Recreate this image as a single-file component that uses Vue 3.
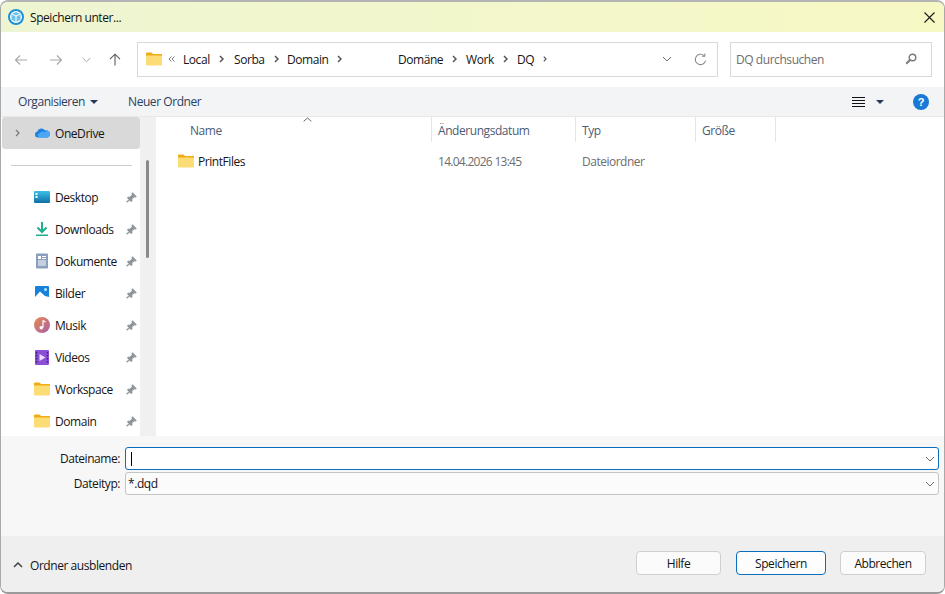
<script setup>
const crumbs = [
  { t: 'Local', w: 51 },
  { t: 'Sorba', w: 53 },
  { t: 'Domain', w: 111 },
  { t: 'Domäne', w: 68 },
  { t: 'Work', w: 51 },
  { t: 'DQ', w: 30 }
]
const places = [
  { t: 'Desktop', i: 'desktop' },
  { t: 'Downloads', i: 'downloads' },
  { t: 'Dokumente', i: 'docs' },
  { t: 'Bilder', i: 'pics' },
  { t: 'Musik', i: 'music' },
  { t: 'Videos', i: 'videos' },
  { t: 'Workspace', i: 'folder' },
  { t: 'Domain', i: 'folder' }
]
const cols = [
  { t: 'Name', w: 276, pad: 34 },
  { t: 'Änderungsdatum', w: 144, pad: 6 },
  { t: 'Typ', w: 120, pad: 6 },
  { t: 'Größe', w: 80, pad: 6 }
]
</script>

<template>
  <div class="win">
    <header class="title">
      <svg class="appicon" width="16" height="16" viewBox="0 0 16 16">
        <circle cx="8" cy="8" r="7" fill="#fff" stroke="#1c8fd6" stroke-width="2" />
        <path d="M8 3 12.500 5V10.800L8 13 3.500 10.800V5Z" fill="#6cc0ec" />
        <path d="M3.500 5 8 7 12.500 5M8 7V13" fill="none" stroke="#fff" stroke-width="1" />
      </svg>
      <span class="title-text">Speichern unter...</span>
      <svg class="close" width="11" height="11" viewBox="0 0 11 11">
        <path d="M.5.5l10 10M10.500.5l-10 10" stroke="#1a1a1a" stroke-width="1.100" fill="none" />
      </svg>
    </header>

    <nav class="navbar">
      <div class="navbtns">
        <svg width="14" height="12" viewBox="0 0 14 12"><path d="M13 6H1.500M6 1.500 1.500 6 6 10.500" fill="none" stroke="#a6a6a6" stroke-width="1.100" /></svg>
        <svg class="nb2" width="14" height="12" viewBox="0 0 14 12"><path d="M1 6h11.500M8 1.500 12.500 6 8 10.500" fill="none" stroke="#a6a6a6" stroke-width="1.100" /></svg>
        <svg class="nb3" width="9" height="6" viewBox="0 0 9 6"><path d="M.7 1 4.500 4.800 8.300 1" fill="none" stroke="#a6a6a6" stroke-width="1" /></svg>
        <svg class="nb4" width="12" height="13" viewBox="0 0 12 13"><path d="M6 12.500V1.200M1 6.200 6 1.200l5 5" fill="none" stroke="#5c5c5c" stroke-width="1.100" /></svg>
      </div>
      <div class="address">
        <svg class="addr-folder" width="16" height="14" viewBox="0 0 16 14">
          <path d="M0 1.500Q0 .5 1 .5H5.500L7 2H16V4H0Z" fill="#f0ad17" />
          <path d="M0 3.500H15Q16 3.500 16 4.500V12.500Q16 13.500 15 13.500H1Q0 13.500 0 12.500Z" fill="#fbdc75" />
        </svg>
        <svg class="overflow" width="7" height="6" viewBox="0 0 7 6"><path d="M3.500.5 1 3l2.500 2.500M6.500.5 4 3l2.500 2.500" fill="none" stroke="#777" stroke-width="1" /></svg>
        <span v-for="c in crumbs" :key="c.t" class="crumb" :style="{ width: c.w + 'px' }">
          <span>{{ c.t }}</span>
          <svg width="5" height="8" viewBox="0 0 5 8"><path d="M1 1l3 3-3 3" fill="none" stroke="#555" stroke-width="1.500" /></svg>
        </span>
        <span class="spacer"></span>
        <svg class="addr-drop" width="10" height="6" viewBox="0 0 10 6"><path d="M1 1l4 4 4-4" fill="none" stroke="#6e6e6e" stroke-width="1" /></svg>
        <svg class="refresh" width="13" height="13" viewBox="0 0 13 13"><path d="M11.600 7.500A5.200 5.200 0 1 1 10 2.600" fill="none" stroke="#8a8a8a" stroke-width="1.100" /><path d="M10.800.4V3.300H7.900" fill="none" stroke="#8a8a8a" stroke-width="1.100" /></svg>
      </div>
      <div class="search">
        <span>DQ durchsuchen</span>
        <svg width="12" height="12" viewBox="0 0 12 12"><circle cx="7.500" cy="4.500" r="3.300" fill="none" stroke="#7a7a7a" stroke-width="1.400" /><path d="M5 7 1.200 10.800" stroke="#7a7a7a" stroke-width="2" /></svg>
      </div>
    </nav>

    <div class="toolbar">
      <span class="tool">Organisieren</span>
      <span class="caret"></span>
      <span class="tool newfolder">Neuer Ordner</span>
      <span class="spacer"></span>
      <svg class="viewicon" width="13" height="10" viewBox="0 0 13 10"><path d="M0 .5h13M0 3.500h13M0 6.500h13M0 9.500h13" stroke="#111" stroke-width="1" /></svg>
      <span class="caret view-caret"></span>
      <svg class="help" width="16" height="16" viewBox="0 0 16 16">
        <circle cx="8" cy="8" r="8" fill="#1979d4" />
        <text x="8" y="12" text-anchor="middle" font-family="Liberation Sans, sans-serif" font-size="11" font-weight="700" fill="#fff">?</text>
      </svg>
    </div>

    <main class="main">
      <aside class="side">
        <div class="side-list">
          <div class="row selected">
            <svg class="expander" width="5" height="8" viewBox="0 0 5 8"><path d="M1 1l3 3-3 3" fill="none" stroke="#777" stroke-width="1.200" /></svg>
            <svg class="item-icon" width="16" height="16" viewBox="0 0 16 16">
              <path d="M3.500 12.500A3 3 0 0 1 3.300 6.600 4.200 4.200 0 0 1 11 5.500 3.500 3.500 0 0 1 15.800 9 3.300 3.300 0 0 1 13 12.500Z" fill="#1f7fe0" />
              <path d="M5 12.500A2.400 2.400 0 0 1 6 8 3 3 0 0 1 11 7.500 2.600 2.600 0 0 1 15.800 9.500 3.300 3.300 0 0 1 13 12.500Z" fill="#4aa8f2" />
            </svg>
            <span class="label">OneDrive</span>
          </div>
          <div class="sep"></div>
          <div v-for="p in places" :key="p.t" class="row">
            <svg class="item-icon" width="16" height="16" viewBox="0 0 16 16">
              <defs>
                <linearGradient id="desk" x1="0" y1="0" x2="0" y2="1"><stop offset="0" stop-color="#3cc0e8" /><stop offset="1" stop-color="#0f6fa8" /></linearGradient>
                <linearGradient id="mus" x1="0" y1="0" x2="1" y2="1"><stop offset="0" stop-color="#e58a4f" /><stop offset="1" stop-color="#a95fa8" /></linearGradient>
              </defs>
              <template v-if="p.i === 'desktop'">
                <rect y="2" width="16" height="12" rx="1" fill="url(#desk)" />
                <rect x="1.500" y="4" width="2" height="2" fill="#fff" />
                <rect x="1.500" y="7" width="2" height="2" fill="#fff" />
              </template>
              <template v-else-if="p.i === 'downloads'">
                <path d="M8 1V10.500M3.500 6.500 8 11l4.500-4.500" fill="none" stroke="#1fae8f" stroke-width="2" />
                <rect x="2" y="13.500" width="12" height="1.500" fill="#1fae8f" />
              </template>
              <template v-else-if="p.i === 'docs'">
                <rect x="2" y="0.500" width="12" height="15" rx="1" fill="#8a9fbc" />
                <rect x="4" y="3" width="3" height="3" fill="#fff" />
                <path d="M8 3.500h4M8 5.500h4M4 8h8M4 10h8M4 12h8" stroke="#fff" stroke-width="1" />
              </template>
              <template v-else-if="p.i === 'pics'">
                <rect x="1" y="1" width="14" height="14" rx="1" fill="#1583dc" />
                <path d="M1 12 6 6.500 11 11 15 12V15H1Z" fill="#fff" />
                <circle cx="11.500" cy="4.500" r="1.500" fill="#bfe2fb" />
              </template>
              <template v-else-if="p.i === 'music'">
                <circle cx="8" cy="8" r="8" fill="url(#mus)" />
                <path d="M9 3.500V10.500" stroke="#fff" stroke-width="1.200" />
                <circle cx="7.300" cy="10.800" r="1.800" fill="#fff" />
                <path d="M9 3.500 11.500 5" stroke="#fff" stroke-width="1.200" />
              </template>
              <template v-else-if="p.i === 'videos'">
                <rect x="1" y="1" width="14" height="15" rx="1" fill="#8a4fd6" />
                <path d="M5.500 5 11.500 8.500 5.500 12Z" fill="#e9dcfb" />
                <path d="M2.500 3v11M13.500 3v11" stroke="#3e1c7a" stroke-width="1.400" stroke-dasharray="1.400 1.600" />
              </template>
              <template v-else>
                <path d="M0 2.500Q0 1.500 1 1.500H5.500L7 3H16V5H0Z" fill="#f0ad17" />
                <path d="M0 4.500H15Q16 4.500 16 5.500V13.500Q16 14.500 15 14.500H1Q0 14.500 0 13.500Z" fill="#fbdc75" />
              </template>
            </svg>
            <span class="label">{{ p.t }}</span>
            <svg class="pin" width="11" height="11" viewBox="0 0 11 11">
              <path d="M6.500.2 10.800 4.500 9.500 5.500 8.200 5.200 6.300 7.300 6.300 9.200 5 10 1 6 1.800 4.700 3.700 4.700 5.800 2.800 5.500 1.500Z" fill="#8e979e" />
              <path d="M3 8 .7 10.300" stroke="#8e979e" stroke-width="1.400" />
            </svg>
          </div>
        </div>
        <div class="scrollbar"><div class="thumb"></div></div>
      </aside>
      <section class="files">
        <div class="headers">
          <div v-for="c in cols" :key="c.t" class="col" :style="{ width: c.w + 'px', paddingLeft: c.pad + 'px' }">{{ c.t }}</div>
          <svg class="sort" width="9" height="5" viewBox="0 0 9 5"><path d="M.7 4.300 4.500 1l3.800 3.300" fill="none" stroke="#666" stroke-width="1" /></svg>
        </div>
        <div class="file">
          <div class="file-name">
            <svg width="16" height="16" viewBox="0 0 16 16">
              <path d="M0 2.500Q0 1.500 1 1.500H5.500L7 3H16V5H0Z" fill="#f0ad17" />
              <path d="M0 4.500H15Q16 4.500 16 5.500V13.500Q16 14.500 15 14.500H1Q0 14.500 0 13.500Z" fill="#fbdc75" />
            </svg>
            <span>PrintFiles</span>
          </div>
          <div class="file-date">14.04.2026 13:45</div>
          <div class="file-type">Dateiordner</div>
        </div>
      </section>
    </main>

    <form class="form" @submit.prevent>
      <div class="field">
        <label>Dateiname:</label>
        <div class="combo active">
          <span class="cursor"></span>
          <span class="spacer"></span>
          <svg width="10" height="6" viewBox="0 0 10 6"><path d="M1 1l4 4 4-4" fill="none" stroke="#6e6e6e" stroke-width="1" /></svg>
        </div>
      </div>
      <div class="field">
        <label>Dateityp:</label>
        <div class="combo">
          <span>*.dqd</span>
          <span class="spacer"></span>
          <svg width="10" height="6" viewBox="0 0 10 6"><path d="M1 1l4 4 4-4" fill="none" stroke="#6e6e6e" stroke-width="1" /></svg>
        </div>
      </div>
    </form>

    <footer class="footer">
      <svg class="collapse" width="10" height="6" viewBox="0 0 10 6"><path d="M1 5l4-4 4 4" fill="none" stroke="#444" stroke-width="1.500" /></svg>
      <span class="hide">Ordner ausblenden</span>
      <span class="spacer"></span>
      <button class="btn b1" type="button">Hilfe</button>
      <button class="btn b2 primary" type="button">Speichern</button>
      <button class="btn b3" type="button">Abbrechen</button>
    </footer>
  </div>
</template>

<style>
html, body { margin: 0; background: #fff; overflow: hidden; }
</style>

<style scoped>
.win {
  width: 945px;
  height: 594px;
  box-sizing: border-box;
  border: 1px solid #a9a9a9;
  border-top: 2px solid #b4b4b4;
  border-bottom: 2px solid #9a9a9a;
  border-radius: 8px;
  overflow: hidden;
  display: flex;
  flex-direction: column;
  font-family: "Open Sans", "Noto Sans", sans-serif;
  font-size: 12px;
  letter-spacing: -0.44px;
  color: #141414;
  background: #fff;
}
.spacer { flex: 1; }
.title {
  height: 30px;
  flex: none;
  display: flex;
  align-items: center;
  padding: 0 8px 0 7px;
  background: linear-gradient(90deg, #eef5d2, #f7f8c4);
}
.title-text { margin-left: 6px; }
.close { margin-left: auto; margin-right: 1px; }
.navbar {
  height: 55px;
  flex: none;
  display: flex;
  align-items: center;
  background: #fff;
  padding-left: 13px;
}
.navbtns { width: 123px; display: flex; align-items: center; flex: none; }
.nb2 { margin-left: 21px; }
.nb3 { margin-left: 19px; }
.nb4 { margin-left: 18px; }
.address {
  width: 581px;
  height: 35px;
  box-sizing: border-box;
  border: 1px solid #d9d9d9;
  display: flex;
  align-items: center;
  padding: 0 10px 0 8px;
  flex: none;
  margin-top: -1px;
}
.overflow { margin: 0 8px 0 6px; flex: none; }
.crumb { display: flex; align-items: center; gap: 9px; flex: none; }
.addr-drop { margin-right: 22px; }
.search {
  width: 202px;
  height: 35px;
  box-sizing: border-box;
  margin-left: 12px;
  margin-top: -1px;
  border: 1px solid #d9d9d9;
  display: flex;
  align-items: center;
  justify-content: space-between;
  padding: 0 14px 0 5px;
  color: #6d6d6d;
  flex: none;
}
.toolbar {
  height: 30px;
  flex: none;
  display: flex;
  align-items: center;
  background: #f3f4f6;
  border-bottom: 1px solid #e8e8e8;
  box-sizing: border-box;
  padding: 0 15px 0 17px;
  color: #2c3e5c;
}
.caret {
  width: 0; height: 0;
  border-left: 4px solid transparent;
  border-right: 4px solid transparent;
  border-top: 4px solid #25395c;
  margin-left: 5px;
}
.newfolder { margin-left: 30px; }
.view-caret { margin-left: 11px; }
.help { margin-left: 29px; }
.main { flex: 1; min-height: 0; display: flex; }
.side { width: 154px; flex: none; display: flex; border-right: 1px solid #eee; box-sizing: content-box; }
.side-list { width: 139px; flex: none; padding: 0 0 0 1px; box-sizing: border-box; overflow: hidden; }
.row { height: 32px; display: flex; align-items: center; padding-left: 32px; position: relative; }
.row.selected { background: #d9d9d9; border-radius: 3px; }
.expander { position: absolute; left: 13px; top: 12px; }
.item-icon { flex: none; }
.label { margin-left: 5px; flex: 1; }
.pin { margin-right: 3px; flex: none; }
.sep { height: 1px; background: #cfcfcf; margin: 16px 8px 15px 9px; }
.scrollbar { width: 16px; background: #f0f0f0; flex: none; padding: 43px 0 0 6px; box-sizing: border-box; }
.thumb { width: 3px; height: 98px; background: #8a8a8a; border-radius: 2px; }
.files { flex: 1; min-width: 0; }
.headers { height: 25px; display: flex; position: relative; color: #4d5b75; }
.col { box-sizing: border-box; border-right: 1px solid #e5e5e5; line-height: 27px; }
.sort { position: absolute; left: 147px; top: 0; }
.file { display: flex; align-items: center; height: 24px; margin-top: 7px; }
.file-name { width: 276px; box-sizing: border-box; padding-left: 22px; display: flex; align-items: center; gap: 4px; }
.file-date { width: 144px; padding-left: 6px; box-sizing: border-box; color: #6d6d6d; letter-spacing: -0.72px; }
.file-type { padding-left: 6px; color: #6d6d6d; letter-spacing: -0.5px; }
.form {
  height: 100px;
  flex: none;
  box-sizing: border-box;
  background: #f7f7f7;
  padding: 11px 5px 0 0;
  display: flex;
  flex-direction: column;
  gap: 2px;
}
.field { display: flex; align-items: center; height: 23px; }
.field label { width: 119px; text-align: right; margin-right: 5px; flex: none; }
.combo {
  flex: 1;
  height: 23px;
  box-sizing: border-box;
  border: 1px solid #c4c4c4;
  border-radius: 3px;
  background: #fbfbfb;
  display: flex;
  align-items: center;
  padding: 0 3px 0 2px;
}
.combo.active { border-color: #0a6ebd; background: #fff; }
.cursor { width: 1px; height: 14px; background: #000; margin-left: 3px; }
.footer {
  height: 56px;
  flex: none;
  display: flex;
  align-items: center;
  background: #efefef;
  padding: 0 18px 0 12px;
}
.collapse, .hide { margin-top: 2px; }
.hide { margin-left: 7px; }
.btn {
  height: 24px;
  box-sizing: border-box;
  border: 1px solid #cfcfcf;
  border-radius: 4px;
  background: #fbfbfb;
  font: inherit;
  letter-spacing: inherit;
  color: inherit;
  padding: 0;
  margin-bottom: 2px;
}
.b1 { width: 85px; }
.b2 { width: 90px; margin-left: 15px; }
.b3 { width: 86px; margin-left: 14px; }
.primary { border-color: #0a6ebd; background: #fdfdfd; }
</style>
